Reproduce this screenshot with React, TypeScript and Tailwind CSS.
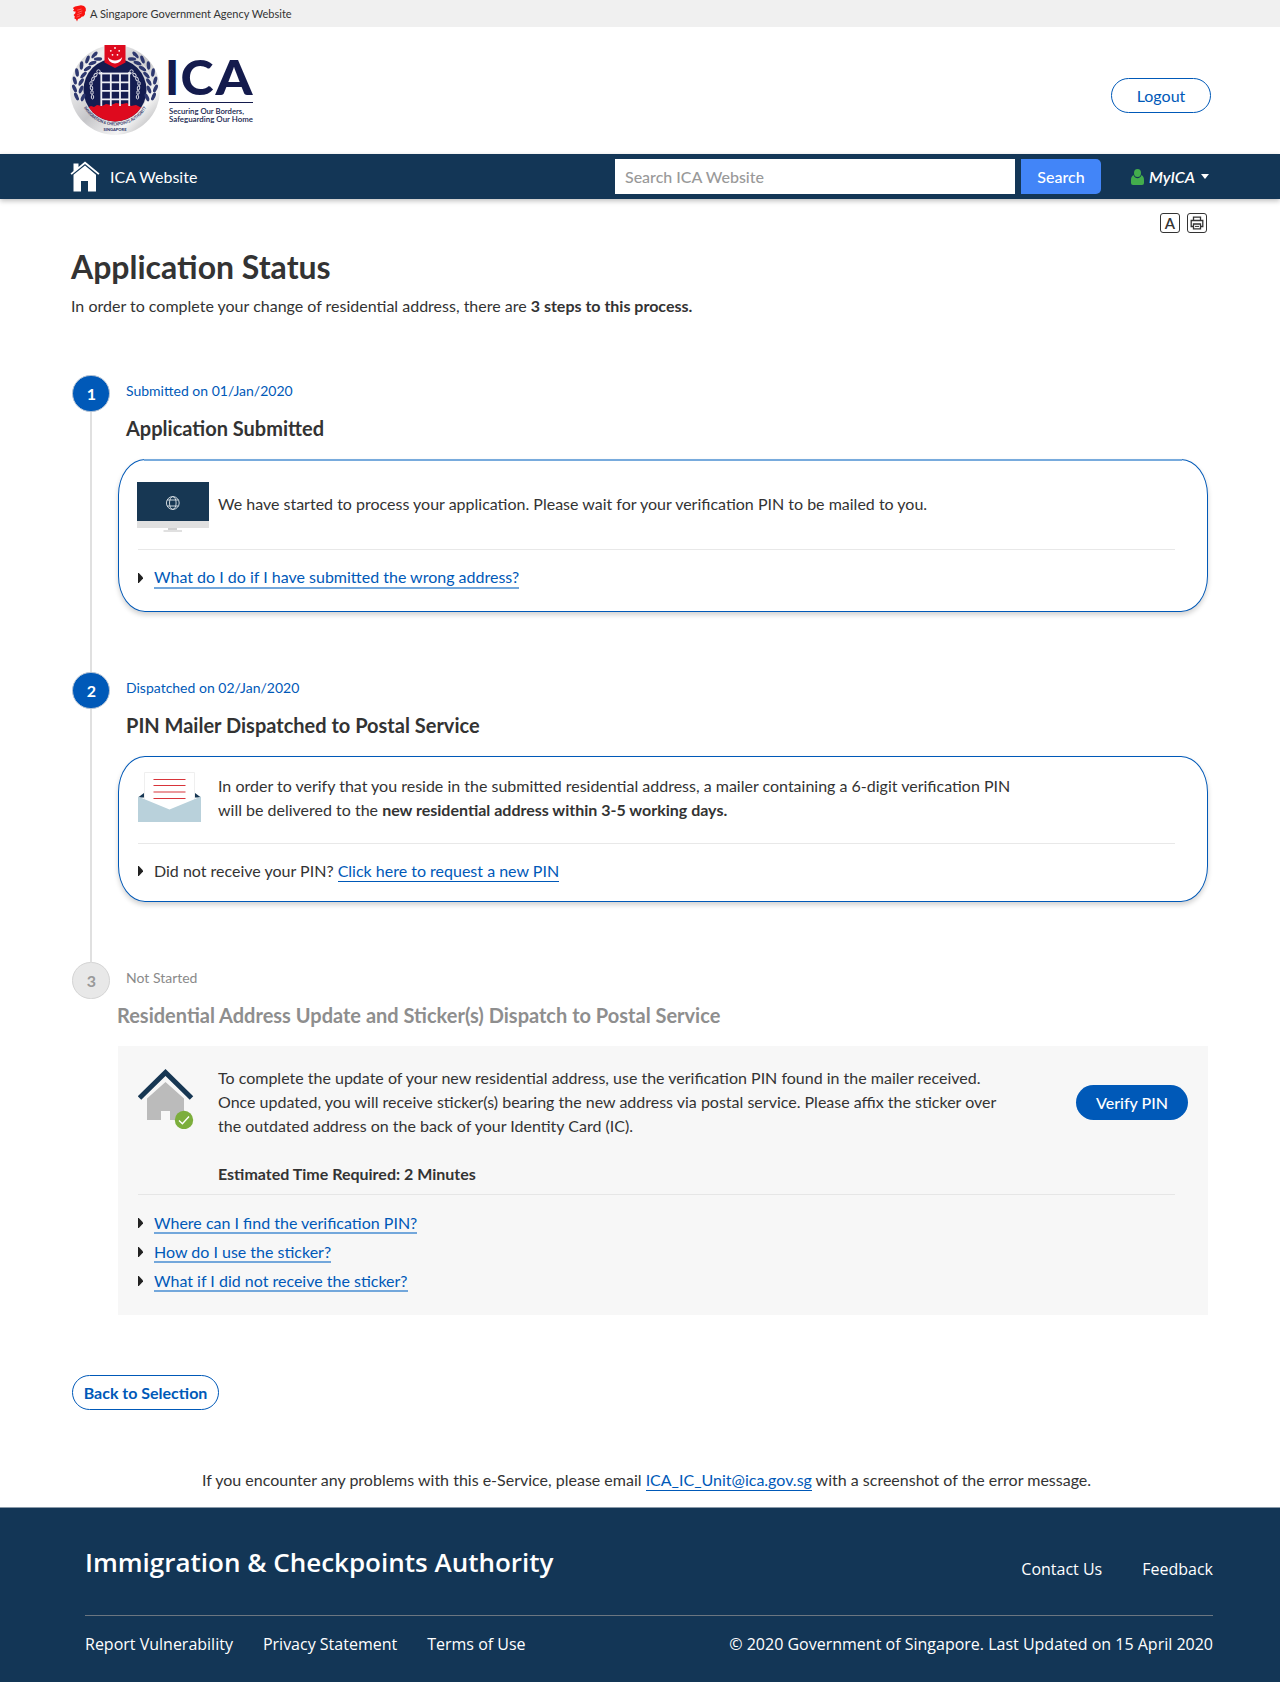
import React from "react";

function Lion() {
  return (
    <svg width="14" height="17" viewBox="0 0 14 17" className="shrink-0">
      <path d="M.8 3 3 1.600 5.500.9 9 .2l3 .8 1.700 2 .2 2.600-1 1.600.1 2-1.300 2-2 .5-1.500 1.600-2.200.6-1 2.500L4 14.200l-1.600-.6.4-2.200-1.200-1.400 1.700-1.700.3-1.700L2 6.600l-1-.8 1.200-1.200z" fill="#fa1310" />
      <path d="M5.200 5.200 9.500 4M5.800 7.500l4.500-1.700M4.800 10l5-2M4.500 12.200l3.500-1.400" stroke="#f7b5b4" strokeWidth=".45" fill="none" />
    </svg>
  );
}

/* Leaf positions along the left branch of the wreath: x, y, rotation */
const leaves: [number, number, number][] = [
  [6.500, 51.500, -25], [13, 52.500, 25],
  [4.500, 43.500, -25], [11, 44.500, 25],
  [4.800, 35.500, -15], [11, 37, 35],
  [7, 27.500, -8], [13.500, 30, 45],
  [11.500, 20.500, 5], [17.500, 23.500, 58],
  [17.500, 14.500, 20], [22.500, 18, 70],
  [24.500, 10, 40], [28, 14, 85],
];

function Wreath() {
  return (
    <g>
      {leaves.map(([x, y, r], i) => (
        <ellipse key={i} cx={x} cy={y} rx="1.800" ry="4.200" fill="#2e386f" transform={`rotate(${r} ${x} ${y})`} />
      ))}
      <path d="M11 57C5 44 6 27 26 11" fill="none" stroke="#f2f2f2" strokeWidth=".8" />
    </g>
  );
}

function Chain() {
  return (
    <g fill="none" stroke="#d9dae4" strokeWidth="1">
      <circle cx="28.500" cy="26.500" r="1.700" />
      <ellipse cx="25.500" cy="30" rx="1.300" ry="2" transform="rotate(40 25.500 30)" />
      <ellipse cx="23" cy="34" rx="1.200" ry="2" transform="rotate(25 23 34)" />
      <ellipse cx="21" cy="38.500" rx="1.200" ry="2" />
      <ellipse cx="21.500" cy="43" rx="1.200" ry="2" transform="rotate(-15 21.500 43)" />
      <ellipse cx="22" cy="47.500" rx="1.200" ry="2" />
      <ellipse cx="22.500" cy="52" rx="1.200" ry="2" />
    </g>
  );
}

function Logo() {
  return (
    <svg width="186" height="92" viewBox="0 0 186 92" className="block">
      <defs>
        <linearGradient id="silver" x1="0" y1="0" x2="1" y2="1">
          <stop offset="0" stopColor="#b0b0b2" />
          <stop offset=".22" stopColor="#f0f0f0" />
          <stop offset=".5" stopColor="#c6c6c9" />
          <stop offset=".75" stopColor="#f4f4f4" />
          <stop offset="1" stopColor="#9c9c9f" />
        </linearGradient>
        <clipPath id="inner"><circle cx="45" cy="45" r="31.500" /></clipPath>
        <path id="arcText" d="M13.250 62A36.500 36.500 0 0 0 76.750 62" />
      </defs>
      <circle cx="45" cy="45" r="45" fill="url(#silver)" />
      <circle cx="45" cy="45" r="32.300" fill="#dcdcdf" />
      <circle cx="45" cy="45" r="31.500" fill="#141c50" />
      <g clipPath="url(#inner)">
        <path d="M14 64l7-3 3 1 3-2 5 1 4-2 5 1 5-2 6 1 5-1 4 3 5-1 4 2 7 1v18H14z" fill="#de0a1e" />
      </g>
      <g stroke="#eceef4" strokeWidth="1.800" fill="none">
        <path d="M29 28.500H61" />
        <path d="M31.300 27v34M40.800 28v33M50 28v33M59.200 27v34M31 37.300h28.500M31 45.800h28.500M31 54.300h28.500" />
      </g>
      <Wreath />
      <g transform="matrix(-1 0 0 1 90 0)"><Wreath /></g>
      <Chain />
      <g transform="matrix(-1 0 0 1 90 0)"><Chain /></g>
      <path d="M34.500 0h21v17.500l-10.500 5.500-10.500-5.500z" fill="#de0a1e" />
      <path d="M37.800 12c1 8.500 13.400 8.500 14.400 0-2.600 4.600-11.800 4.600-14.400 0z" fill="#fff" />
      <g fill="#fff">
        <circle cx="45" cy="3" r=".9" /><circle cx="40.800" cy="5.800" r=".9" /><circle cx="49.200" cy="5.800" r=".9" />
        <circle cx="42.500" cy="9.800" r=".9" /><circle cx="47.500" cy="9.800" r=".9" />
      </g>
      <text fontFamily="Lato, sans-serif" fontSize="4.200" fontWeight="900" fill="#333a6b">
        <textPath href="#arcText" startOffset="1" textLength="75" lengthAdjust="spacingAndGlyphs">IMMIGRATION &amp; CHECKPOINTS AUTHORITY</textPath>
      </text>
      <text x="45" y="85.500" textAnchor="middle" textLength="23" lengthAdjust="spacingAndGlyphs" fontFamily="Lato, sans-serif" fontSize="4.400" fontWeight="900" fill="#333a6b">SINGAPORE</text>
      <g fontFamily="Lato, sans-serif" fontSize="47" fontWeight="900" fill="#141b4d">
        <text x="95" y="50">I</text>
        <text x="110.500" y="50" textLength="33" lengthAdjust="spacingAndGlyphs">C</text>
        <text x="145.500" y="50" textLength="37" lengthAdjust="spacingAndGlyphs">A</text>
      </g>
      <path d="M99 57.500h84" stroke="#141b4d" strokeWidth="1.200" />
      <text x="99" y="69" textLength="75" lengthAdjust="spacingAndGlyphs" fontFamily="Lato, sans-serif" fontSize="7.600" fontWeight="600" fill="#141b4d">Securing Our Borders,</text>
      <text x="99" y="77" textLength="84" lengthAdjust="spacingAndGlyphs" fontFamily="Lato, sans-serif" fontSize="7.600" fontWeight="600" fill="#141b4d">Safeguarding Our Home</text>
    </svg>
  );
}

function HomeIcon() {
  return (
    <svg width="30" height="31" viewBox="0 0 30 31" fill="#fff">
      <path d="M3.500 2.500h5V6L15 .5l14.500 12-1.200 1.200L15 3 1.700 13.700.5 12.500 3.500 10z" />
      <path d="M15 4.500 26 13.700V30.500h-8V20h-7v10.500H3.500V13.700z" />
    </svg>
  );
}

function Monitor() {
  return (
    <svg width="72" height="50" viewBox="0 0 72 50">
      <path d="M0 0h72v39H0z" fill="#173753" />
      <path d="M0 39h72v7H0z" fill="#e0e0e0" />
      <path d="M31 46h9v2h-9z" fill="#d0d0d0" />
      <path d="M26.500 48h18.500v2H26.500z" fill="#e0e0e0" />
      <g fill="none" stroke="#dfe5ea" strokeWidth=".9">
        <circle cx="35.800" cy="21" r="6.400" />
        <ellipse cx="35.800" cy="21" rx="3.300" ry="6.400" />
        <path d="M30 18h11.600M30 24h11.600" />
      </g>
    </svg>
  );
}

function Envelope() {
  return (
    <svg width="63" height="50" viewBox="0 0 63 50">
      <path d="M0 25.500 6 21h51l6 4.500z" fill="#173753" />
      <path d="M6.500.5h50V40h-50z" fill="#fff" stroke="#efefef" />
      <path d="M0 24.500 6 27 31.500 37.500 57 27l6-2.500V50H0z" fill="#b9d1db" />
      <path d="M15.500 7.500h32M15.500 13.500h32M15.500 20h32M15.500 26.500h32" stroke="#d8343a" strokeWidth="1.200" />
    </svg>
  );
}

function HouseCheck() {
  return (
    <svg width="56" height="60" viewBox="0 0 56 60">
      <path d="M27.500 13 46 29.500V51H32V42h-9v9H9V29.500z" fill="#bbb" />
      <path d="M1.500 29 27.500 3.500 53.500 29" fill="none" stroke="#173753" strokeWidth="5" />
      <circle cx="46" cy="51" r="9.200" fill="#7cae3c" />
      <path d="m41 51.500 3.400 3.300 6.600-7.300" fill="none" stroke="#fff" strokeWidth="1.400" />
    </svg>
  );
}

function Arrow() {
  return (
    <svg width="5" height="10" viewBox="0 0 5 10" className="mr-[11px] shrink-0">
      <path d="M0 0h.8L5 4.400v1.200L.8 10H0z" fill="#222" />
    </svg>
  );
}

function Link({ className = "border-b border-[#0059b8] leading-[23px]", children }: { className?: string; children: React.ReactNode }) {
  return <a className={`inline-block h-[23px] text-[#0059b8] ${className}`}>{children}</a>;
}

type StepProps = {
  n: number;
  date: string;
  title: string;
  height: string;
  inactive?: boolean;
  last?: boolean;
  children: React.ReactNode;
};

function Step({ n, date, title, height, inactive, last, children }: StepProps) {
  return (
    <section className={`flex ${height}`}>
      <div className="flex w-[38px] shrink-0 flex-col items-center">
        <div
          className={`flex h-[37px] w-[38px] shrink-0 items-center justify-center rounded-full border pl-px text-[16px] font-bold ${
            inactive ? "border-[#d4d4d4] bg-[#e8e8e8] text-[#999]" : "border-[#b9c6d6] bg-[#0059b8] text-white"
          }`}
        >
          {n}
        </div>
        {!last && <div className="w-[2px] grow bg-[#e0e0e0]" />}
      </div>
      <div className="ml-2 w-[1090px]">
        <p className={`mt-[6px] ml-2 text-[14px] leading-[20px] ${inactive ? "text-[#8a8a8a]" : "text-[#0059b8]"}`}>{date}</p>
        <h2 className={`mt-[14px] text-[20px] leading-[26px] font-bold ${inactive ? "-ml-px text-[#8e8e8e]" : "ml-2 text-[#333]"}`}>{title}</h2>
        {children}
      </div>
    </section>
  );
}

const cardClass =
  "relative mt-[18px] flex w-[1090px] flex-col border border-[#0059b8] bg-white pl-[19px] shadow-[0_3px_5px_rgba(0,0,0,0.18)] [border-radius:27px/36px]";

export default function App() {
  return (
    <div className="flex h-[1682px] w-[1280px] flex-col overflow-hidden bg-white font-['Lato',sans-serif] text-[16px] leading-[24px] text-[#333]">
      <div className="flex h-[27px] shrink-0 items-center bg-[#f0f0f0] pl-[72px] text-[11px]">
        <Lion />
        <span className="ml-1">A Singapore Government Agency Website</span>
      </div>

      <header className="flex h-[127px] shrink-0 items-start justify-between pr-[69px] pl-[70px]">
        <div className="mt-[18px]"><Logo /></div>
        <button className="mt-[51px] h-[35px] w-[100px] rounded-full border border-[#0059b8] pt-px text-[#0059b8]">Logout</button>
      </header>

      <nav className="flex h-[45px] shrink-0 items-center bg-[#133656] pr-[71px] pl-[70px] text-white shadow-[0_2px_5px_rgba(0,0,0,0.25)]">
        <HomeIcon />
        <span className="ml-[10px]">ICA Website</span>
        <div className="ml-auto flex h-[35px] w-[400px] items-center bg-white pl-[10px] font-medium text-[#999]">Search ICA Website</div>
        <button className="ml-[6px] h-[35px] w-[80px] rounded-r-[5px] bg-[#4285f8] font-medium">Search</button>
        <svg width="13" height="16" viewBox="0 0 13 16" fill="#43ad4c" className="ml-[30px]">
          <ellipse cx="6.500" cy="4" rx="3.500" ry="4" />
          <path d="M2.500 6C.5 7 0 9 0 11v3q0 2 2 2h9q2 0 2-2v-3c0-2-.5-4-2.500-5-.5 2-2 3.200-4 3.200S3 8 2.500 6z" />
        </svg>
        <span className="ml-[5px] font-semibold italic">MyICA</span>
        <svg width="8" height="5" viewBox="0 0 8 5" fill="#fff" className="ml-[6px]"><path d="M0 0h8L4 5z" /></svg>
      </nav>

      <div className="flex h-[48px] shrink-0 justify-end gap-[7px] pt-[14px] pr-[73px]">
        <div className="flex h-[20px] w-[20px] items-center justify-center rounded-[3px] border border-[#333] text-[15px] leading-none font-semibold">A</div>
        <div className="flex h-[20px] w-[20px] items-center justify-center rounded-[3px] border border-[#333]">
          <svg width="14" height="14" viewBox="0 0 14 14" fill="none" stroke="#333" strokeWidth="1.300">
            <path d="M3.500 4.500V1.200h7v3.300M3.500 10.500H1.200v-6h11.600v6h-2.300" />
            <path d="M3.500 8h7v4.800h-7z" />
            <path d="M5 10.400h4" strokeWidth="1" />
          </svg>
        </div>
      </div>

      <main className="h-[1260px] shrink-0 pl-[71px]">
        <h1 className="-mt-px text-[32px] leading-[42px] font-bold">Application Status</h1>
        <p className="mt-[6px]">
          In order to complete your change of residential address, there are <b>3 steps to this process.</b>
        </p>

        <div className="mt-[57px] pl-px">
          <Step n={1} date="Submitted on 01/Jan/2020" title="Application Submitted" height="h-[297px]">
            <div className={`${cardClass} h-[153px]`}>
              <div className="absolute -top-px right-[25px] left-[25px] h-[2px] bg-[#78abdd]" />
              <div className="flex h-[90px] w-[1037px] border-b border-[#e8e8e8] pt-[22px]">
                <div className="-ml-px w-[81px] shrink-0"><Monitor /></div>
                <p className="mt-[10px]">We have started to process your application. Please wait for your verification PIN to be mailed to you.</p>
              </div>
              <div className="mt-[16px] flex items-center">
                <Arrow />
                <Link className="border-b-2 border-[#73a7db] leading-[21px]">What do I do if I have submitted the wrong address?</Link>
              </div>
            </div>
          </Step>

          <Step n={2} date="Dispatched on 02/Jan/2020" title="PIN Mailer Dispatched to Postal Service" height="h-[290px]">
            <div className={`${cardClass} h-[146px]`}>
              <div className="flex h-[87px] w-[1037px] border-b border-[#e8e8e8] pt-[15px]">
                <div className="w-[80px] shrink-0"><Envelope /></div>
                <p className="mt-[2px] w-[820px]">
                  In order to verify that you reside in the submitted residential address, a mailer containing a 6-digit verification PIN
                  <br />
                  will be delivered to the <b>new residential address within 3-5 working days.</b>
                </p>
              </div>
              <div className="mt-[15px] flex items-start">
                <div className="flex h-[24px] items-center"><Arrow /></div>
                <span>Did not receive your PIN?&nbsp;</span>
                <Link className="border-b border-[#0059b8] leading-[24px]">Click here to request a new PIN</Link>
              </div>
            </div>
          </Step>

          <Step n={3} date="Not Started" title="Residential Address Update and Sticker(s) Dispatch to Postal Service" height="h-[353px]" inactive last>
            <div className="mt-[18px] h-[269px] w-[1090px] bg-[#f7f7f7] pl-[20px]">
              <div className="flex h-[149px] w-[1050px] pt-[20px]">
                <div className="mt-[3px] w-[80px] shrink-0"><HouseCheck /></div>
                <p className="w-[790px]">
                  To complete the update of your new residential address, use the verification PIN found in the mailer received.
                  <br />
                  Once updated, you will receive sticker(s) bearing the new address via postal service. Please affix the sticker over
                  <br />
                  the outdated address on the back of your Identity Card (IC).
                  <br />
                  <br />
                  <b>Estimated Time Required: 2 Minutes</b>
                </p>
                <button className="mt-[19px] ml-auto h-[35px] w-[112px] rounded-full bg-[#0059b8] pt-px font-medium text-white">Verify PIN</button>
              </div>
              <div className="-mt-px w-[1037px] border-b border-[#e6e6e6]" />
              <div className="mt-[16px] flex flex-col gap-[6px]">
                {["Where can I find the verification PIN?", "How do I use the sticker?", "What if I did not receive the sticker?"].map((q) => (
                  <div key={q} className="flex items-center">
                    <Arrow />
                    <Link className="border-b-2 border-[#73a7db] leading-[23px]">{q}</Link>
                  </div>
                ))}
              </div>
            </div>
          </Step>

          <button className="mt-[60px] block h-[35px] w-[147px] rounded-full border border-[#0059b8] font-bold text-[#0059b8]">Back to Selection</button>
        </div>

        <p className="mt-[58px] ml-[131px]">
          If you encounter any problems with this e-Service, please email <Link>ICA_IC_Unit@ica.gov.sg</Link> with a screenshot of the error message.
        </p>
      </main>

      <footer className="h-[175px] shrink-0 border-t border-[#8a9aa9] bg-[#133656] pr-[67px] pl-[85px] font-['Open_Sans',sans-serif] text-white">
        <div className="flex h-[108px] justify-between border-b border-[#6b7680]">
          <div className="mt-[36px] text-[26px] leading-[36px] font-semibold">Immigration &amp; Checkpoints Authority</div>
          <div className="mt-[49px] flex gap-[40px]">
            <span>Contact Us</span>
            <span>Feedback</span>
          </div>
        </div>
        <div className="mt-[16px] flex">
          <span>Report Vulnerability</span>
          <span className="ml-[30px]">Privacy Statement</span>
          <span className="ml-[30px]">Terms of Use</span>
          <span className="ml-auto">© 2020 Government of Singapore. Last Updated on 15 April 2020</span>
        </div>
      </footer>
    </div>
  );
}
